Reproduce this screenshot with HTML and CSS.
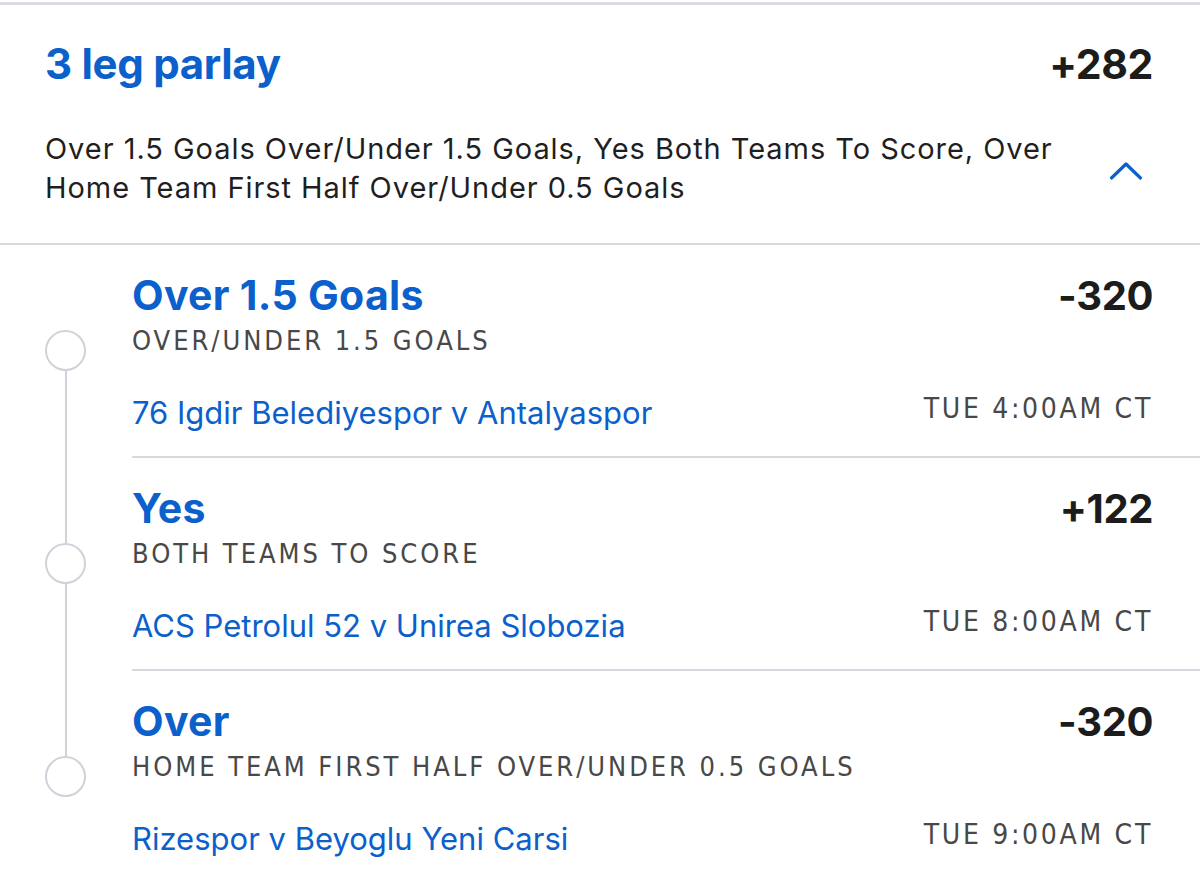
FILE: index.html
```html
<!DOCTYPE html>
<html lang="en">
<head>
<meta charset="utf-8">
<title>3 leg parlay</title>
<link rel="stylesheet" href="styles.css">
</head>
<body>
<div class="slip">
  <header class="parlay">
    <div class="parlay-head">
      <h1 class="parlay-title">3 leg parlay</h1>
      <span class="odds odds-lg">+282</span>
    </div>
    <div class="parlay-summary">
      <p class="summary-text">Over 1.5 Goals Over/Under 1.5 Goals, Yes Both Teams To Score, Over Home Team First Half Over/Under 0.5 Goals</p>
      <svg class="chevron" width="34" height="20" viewBox="0 0 34 20" aria-hidden="true">
        <path d="M2.5 17 L17 3 L31.5 17" fill="none" stroke="#0b60cc" stroke-width="3.2" stroke-linecap="round" stroke-linejoin="round"/>
      </svg>
    </div>
  </header>

  <section class="legs">
    <div class="leg leg-first">
      <div class="rail"><span class="seg seg-top"></span><span class="dot"></span><span class="seg seg-bottom"></span></div>
      <div class="leg-body">
        <div class="leg-row">
          <span class="leg-title">Over 1.5 Goals</span>
          <span class="odds">-320</span>
        </div>
        <div class="leg-market">OVER/UNDER 1.5 GOALS</div>
        <div class="leg-row leg-event">
          <span class="event-name">76 Igdir Belediyespor v Antalyaspor</span>
          <span class="event-time">TUE 4:00AM CT</span>
        </div>
      </div>
    </div>

    <div class="leg">
      <div class="rail"><span class="seg seg-top"></span><span class="dot"></span><span class="seg seg-bottom"></span></div>
      <div class="leg-body">
        <div class="leg-row">
          <span class="leg-title">Yes</span>
          <span class="odds">+122</span>
        </div>
        <div class="leg-market">BOTH TEAMS TO SCORE</div>
        <div class="leg-row leg-event">
          <span class="event-name">ACS Petrolul 52 v Unirea Slobozia</span>
          <span class="event-time">TUE 8:00AM CT</span>
        </div>
      </div>
    </div>

    <div class="leg leg-last">
      <div class="rail"><span class="seg seg-top"></span><span class="dot"></span><span class="seg seg-bottom"></span></div>
      <div class="leg-body">
        <div class="leg-row">
          <span class="leg-title">Over</span>
          <span class="odds">-320</span>
        </div>
        <div class="leg-market">HOME TEAM FIRST HALF OVER/UNDER 0.5 GOALS</div>
        <div class="leg-row leg-event">
          <span class="event-name">Rizespor v Beyoglu Yeni Carsi</span>
          <span class="event-time">TUE 9:00AM CT</span>
        </div>
      </div>
    </div>
  </section>
</div>
</body>
</html>
```

FILE: styles.css
```css
* { box-sizing: border-box; }

html, body {
  margin: 0;
  padding: 0;
  background: #ffffff;
}

body {
  font-family: "Inter", "Lato", "Noto Sans", sans-serif;
  color: #1e1e1e;
  overflow: hidden;
  height: 874px;
}

.slip {
  padding-top: 2px;
}

.parlay {
  border-top: 3px solid #d9dde3;
  border-bottom: 2px solid #d6dae0;
  padding: 33px 47px 0 45px;
  height: 243px;
}

.parlay-head {
  display: flex;
  justify-content: space-between;
  align-items: baseline;
}

.parlay-title {
  margin: 0;
  font-size: 42px;
  line-height: 52px;
  font-weight: 700;
  letter-spacing: -0.3px;
  color: #0b60cc;
}

.odds {
  font-size: 40px;
  font-weight: 700;
  color: #1c1c1c;
  line-height: 46px;
  letter-spacing: -0.4px;
}

.odds-lg {
  font-size: 41px;
  line-height: 52px;
}

.parlay-summary {
  display: flex;
  align-items: center;
  justify-content: space-between;
  margin-top: 39px;
}

.summary-text {
  margin: 0;
  width: 1030px;
  font-size: 29px;
  line-height: 39px;
  letter-spacing: 0.95px;
  color: #1f1f1f;
}

.chevron {
  flex: none;
  margin-right: 10px;
  margin-top: 6px;
}

.legs {
  display: flex;
  flex-direction: column;
}

.leg {
  display: flex;
  height: 213px;
}

.rail {
  width: 132px;
  flex: none;
  display: flex;
  flex-direction: column;
  padding-left: 45px;
}

.seg {
  display: block;
  width: 2px;
  margin-left: 19.5px;
  background: #cfd3d9;
}

.seg-top { height: 85px; flex: none; }
.seg-bottom { flex: 1; }

.leg-first .seg-top { visibility: hidden; }
.leg-last .seg-bottom { visibility: hidden; }

.dot {
  display: block;
  width: 41px;
  height: 41px;
  flex: none;
  border-radius: 50%;
  border: 2.5px solid #cfd3d9;
}

.leg-body {
  flex: 1;
  padding: 27px 47px 0 0;
  border-bottom: 2px solid #d6dae0;
}

.leg-last .leg-body { border-bottom: none; }

.leg-row {
  display: flex;
  justify-content: space-between;
  align-items: baseline;
}

.leg-title {
  font-size: 41px;
  line-height: 46px;
  font-weight: 700;
  letter-spacing: 0.3px;
  color: #0b60cc;
}

.leg-market {
  font-family: "DejaVu Sans Condensed", "Liberation Sans Narrow", "Roboto", sans-serif;
  font-stretch: condensed;
  font-size: 27px;
  line-height: 34px;
  margin-top: 5px;
  letter-spacing: 2.95px;
  color: #484848;
}

.leg-event {
  margin-top: 37px;
}

.event-name {
  font-size: 31px;
  line-height: 36px;
  color: #0b60cc;
}

.event-time {
  font-family: "DejaVu Sans Condensed", "Liberation Sans Narrow", "Roboto", sans-serif;
  font-stretch: condensed;
  font-size: 28px;
  line-height: 36px;
  letter-spacing: 2.7px;
  color: #484848;
  position: relative;
  top: -6px;
}
```
